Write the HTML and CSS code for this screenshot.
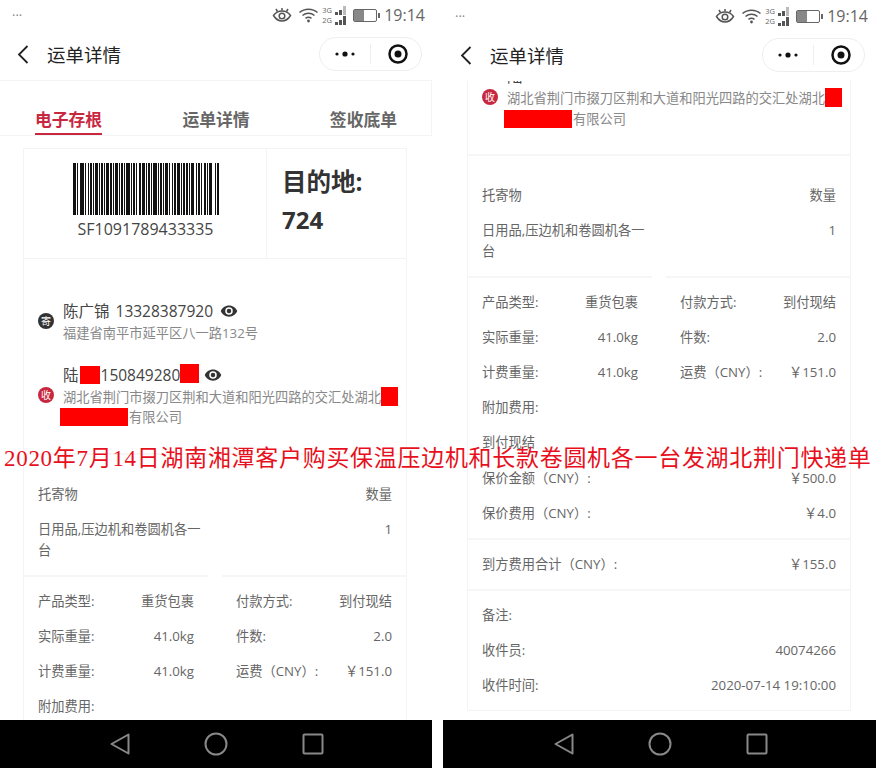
FILE: index.html
```html
<!DOCTYPE html>
<html lang="zh-CN">
<head>
  <meta charset="UTF-8">
  <title>运单详情</title>
  <link rel="stylesheet" href="styles.css">
</head>
<body>
  <div class="phone">
    <div class="status">
      <span class="status-dots">···</span>
      <svg class="ic-eye" width="20" height="16" viewBox="0 0 20 16"><path d="M1.500 8.500C4 5 7 4 10 4s6 1 8.500 4.500C16 12.500 13 14 10 14s-6-1.500-8.500-5.500z"/><circle cx="10" cy="9" r="2.800"/><path d="M4 2l1.500 2.500M10 1v2.500M16 2l-1.500 2.500"/></svg>
      <svg class="ic-wifi" width="21" height="16" viewBox="0 0 21 16"><path d="M1.500 5.500c5-4.500 13-4.500 18 0M4.500 8.500c3.500-3 8.500-3 12 0M7.500 11.300c2-1.500 4-1.500 6 0"/><circle cx="10.500" cy="14" r="1.400"/></svg>
      <div class="net">
        <div class="net-row"><span>3G</span><i class="b1"></i><i class="b2"></i><i class="b3 dim"></i></div>
        <div class="net-row"><span>2G</span><i class="b1"></i><i class="b2"></i><i class="b3"></i></div>
      </div>
      <div class="battery"><div class="battery-fill"></div></div>
      <span class="time">19:14</span>
    </div>
    <div class="nav">
      <svg class="back" width="12" height="19" viewBox="0 0 12 19"><path d="M10.500 1L2 9.500l8.500 8.500"/></svg>
      <span class="nav-title">运单详情</span>
      <div class="capsule">
        <svg class="more" width="20" height="6" viewBox="0 0 20 6"><circle cx="2" cy="3" r="1.600"/><circle cx="10" cy="3" r="2.600"/><circle cx="18" cy="3" r="1.600"/></svg>
        <span class="capsule-line"></span>
        <svg class="target" width="20" height="20" viewBox="0 0 20 20"><circle class="ring" cx="10" cy="10" r="8.500"/><circle cx="10" cy="10" r="3.500"/></svg>
      </div>
    </div>
    <div class="tabs">
      <span class="tab active">电子存根</span>
      <span class="tab">运单详情</span>
      <span class="tab">签收底单</span>
    </div>
    <div class="content has-tabs">
      <div class="card">
        <div class="ticket">
          <div class="code-cell">
            <svg class="barcode" width="146" height="52" viewBox="0 0 146 52"><line x1="0" y1="26" x2="146" y2="26" stroke-dasharray="3 1 1 2 4 1 1 2 1 1 2 1 1 1 3 1 1 1 2 1 1 1 3 1 2 1 1 1 3 1 1 1 2 1 1 1 4 1 1 1 2 1 1 2 2 1 3 1 1 1 2 1 1 1 4 1 1 1 2 1 1 1 3 1 1 2 1 1 2 1 3 1 1 1 2 1 2 1 1 1 3 2 1 1 2 1 1 2 2 1 1 1 3"/></svg>
            <div class="code-text">SF1091789433335</div>
          </div>
          <div class="dest">
            <div class="dest-label">目的地:</div>
            <div class="dest-code">724</div>
          </div>
        </div>
        <div class="contacts">
          <div class="contact">
            <span class="badge">寄</span>
            <div class="contact-body">
              <div class="contact-name">陈广锦 13328387920<svg class="view" width="18" height="18" viewBox="0 0 24 24"><path d="M12 4.500C7 4.500 2.700 7.600 1 12c1.700 4.400 6 7.500 11 7.500s9.300-3.100 11-7.500c-1.700-4.400-6-7.500-11-7.500zM12 17a5 5 0 1 1 0-10 5 5 0 0 1 0 10zm0-8a3 3 0 1 0 0 6 3 3 0 0 0 0-6z"/></svg></div>
              <div class="contact-addr">福建省南平市延平区八一路132号</div>
            </div>
          </div>
          <div class="contact">
            <span class="badge red">收</span>
            <div class="contact-body">
              <div class="contact-name">陆<i class="mask m-name"></i>150849280<i class="mask m-phone"></i><svg class="view" width="18" height="18" viewBox="0 0 24 24"><path d="M12 4.500C7 4.500 2.700 7.600 1 12c1.700 4.400 6 7.500 11 7.500s9.300-3.100 11-7.500c-1.700-4.400-6-7.500-11-7.500zM12 17a5 5 0 1 1 0-10 5 5 0 0 1 0 10zm0-8a3 3 0 1 0 0 6 3 3 0 0 0 0-6z"/></svg></div>
              <div class="contact-addr">湖北省荆门市掇刀区荆和大道和阳光四路的交汇处湖北<i class="mask m-end"></i><i class="mask m-start"></i>有限公司</div>
            </div>
          </div>
        </div>
        <div class="goods">
          <div class="row"><span>托寄物</span><span>数量</span></div>
          <div class="goods-item"><div class="goods-name">日用品,压边机和卷圆机各一台</div><span>1</span></div>
        </div>
        <div class="split-rule"><i></i><i></i></div>
        <div class="fees">
          <div class="fee-grid">
            <div class="row"><span>产品类型:</span><span>重货包裹</span></div>
            <div class="row"><span>付款方式:</span><span>到付现结</span></div>
            <div class="row"><span>实际重量:</span><span>41.0kg</span></div>
            <div class="row"><span>件数:</span><span>2.0</span></div>
            <div class="row"><span>计费重量:</span><span>41.0kg</span></div>
            <div class="row"><span>运费（CNY）:</span><span>￥151.0</span></div>
            <div class="row"><span>附加费用:</span></div>
          </div>
        </div>
      </div>
    </div>
    <div class="softkeys">
      <svg width="20" height="22" viewBox="0 0 20 22"><path d="M18.500 1.500L1.500 11l17 9.500z"/></svg>
      <svg width="24" height="24" viewBox="0 0 24 24"><circle cx="12" cy="12" r="10.500"/></svg>
      <svg width="22" height="22" viewBox="0 0 22 22"><rect x="1.500" y="1.500" width="19" height="19" rx="1"/></svg>
    </div>
  </div>

  <div class="phone second">
    <div class="status">
      <span class="status-dots">···</span>
      <svg class="ic-eye" width="20" height="16" viewBox="0 0 20 16"><path d="M1.500 8.500C4 5 7 4 10 4s6 1 8.500 4.500C16 12.500 13 14 10 14s-6-1.500-8.500-5.500z"/><circle cx="10" cy="9" r="2.800"/><path d="M4 2l1.500 2.500M10 1v2.500M16 2l-1.500 2.500"/></svg>
      <svg class="ic-wifi" width="21" height="16" viewBox="0 0 21 16"><path d="M1.500 5.500c5-4.500 13-4.500 18 0M4.500 8.500c3.500-3 8.500-3 12 0M7.500 11.300c2-1.500 4-1.500 6 0"/><circle cx="10.500" cy="14" r="1.400"/></svg>
      <div class="net">
        <div class="net-row"><span>3G</span><i class="b1"></i><i class="b2"></i><i class="b3 dim"></i></div>
        <div class="net-row"><span>2G</span><i class="b1"></i><i class="b2"></i><i class="b3"></i></div>
      </div>
      <div class="battery"><div class="battery-fill"></div></div>
      <span class="time">19:14</span>
    </div>
    <div class="nav">
      <svg class="back" width="12" height="19" viewBox="0 0 12 19"><path d="M10.500 1L2 9.500l8.500 8.500"/></svg>
      <span class="nav-title">运单详情</span>
      <div class="capsule">
        <svg class="more" width="20" height="6" viewBox="0 0 20 6"><circle cx="2" cy="3" r="1.600"/><circle cx="10" cy="3" r="2.600"/><circle cx="18" cy="3" r="1.600"/></svg>
        <span class="capsule-line"></span>
        <svg class="target" width="20" height="20" viewBox="0 0 20 20"><circle class="ring" cx="10" cy="10" r="8.500"/><circle cx="10" cy="10" r="3.500"/></svg>
      </div>
    </div>
    <div class="content">
      <div class="card scrolled">
        <div class="contacts tail">
          <div class="contact">
            <span class="badge red">收</span>
            <div class="contact-body">
              <div class="contact-name">陆</div>
              <div class="contact-addr">湖北省荆门市掇刀区荆和大道和阳光四路的交汇处湖北<i class="mask m-end"></i><i class="mask m-start"></i>有限公司</div>
            </div>
          </div>
        </div>
        <div class="goods">
          <div class="row"><span>托寄物</span><span>数量</span></div>
          <div class="goods-item"><div class="goods-name">日用品,压边机和卷圆机各一台</div><span>1</span></div>
        </div>
        <div class="split-rule"><i></i><i></i></div>
        <div class="fees">
          <div class="fee-grid">
            <div class="row"><span>产品类型:</span><span>重货包裹</span></div>
            <div class="row"><span>付款方式:</span><span>到付现结</span></div>
            <div class="row"><span>实际重量:</span><span>41.0kg</span></div>
            <div class="row"><span>件数:</span><span>2.0</span></div>
            <div class="row"><span>计费重量:</span><span>41.0kg</span></div>
            <div class="row"><span>运费（CNY）:</span><span>￥151.0</span></div>
          </div>
          <div class="row"><span>附加费用:</span></div>
          <div class="row"><span>到付现结</span></div>
          <div class="row insured"><span>保价金额（CNY）:</span><span>￥500.0</span></div>
          <div class="row"><span>保价费用（CNY）:</span><span>￥4.0</span></div>
        </div>
        <div class="block"><div class="row"><span>到方费用合计（CNY）:</span><span>￥155.0</span></div></div>
        <div class="block last">
          <div class="row"><span>备注:</span></div>
          <div class="row"><span>收件员:</span><span>40074266</span></div>
          <div class="row"><span>收件时间:</span><span>2020-07-14 19:10:00</span></div>
        </div>
      </div>
    </div>
    <div class="softkeys">
      <svg width="20" height="22" viewBox="0 0 20 22"><path d="M18.500 1.500L1.500 11l17 9.500z"/></svg>
      <svg width="24" height="24" viewBox="0 0 24 24"><circle cx="12" cy="12" r="10.500"/></svg>
      <svg width="22" height="22" viewBox="0 0 22 22"><rect x="1.500" y="1.500" width="19" height="19" rx="1"/></svg>
    </div>
  </div>

  <div class="caption">2020年7月14日湖南湘潭客户购买保温压边机和长款卷圆机各一台发湖北荆门快递单</div>
</body>
</html>
```

FILE: styles.css
```css
html, body { margin: 0; padding: 0; }
body { position: relative; width: 877px; height: 768px; overflow: hidden; display: flex; gap: 11px; background: #fff; color: #555; font-family: "Open Sans", "Noto Sans CJK SC", sans-serif; }
i { display: block; }

.phone { width: 432px; height: 768px; flex: none; display: flex; flex-direction: column; }
.phone.second { margin-top: 1px; height: 767px; }

.status { height: 30px; flex: none; display: flex; align-items: center; gap: 6px; padding: 0 7px 0 12px; color: #666; }
.status-dots { margin-right: auto; font-size: 13px; color: #888; }
.ic-eye path, .ic-wifi path { fill: none; stroke: #555; stroke-width: 1.500; }
.ic-eye circle { fill: none; stroke: #555; stroke-width: 1.500; }
.ic-wifi circle { fill: #555; }
.net { width: 25px; font-size: 7.500px; line-height: 10px; color: #666; margin-left: -3px; }
.net-row { display: flex; align-items: flex-end; height: 10px; gap: 1px; }
.net-row span { width: 12px; }
.net-row i { width: 3px; background: #555; }
.net-row .b1 { height: 3px; }
.net-row .b2 { height: 5px; }
.net-row .b3 { height: 9px; }
.net-row .dim { background: #bbb; }
.battery { position: relative; width: 22px; height: 11px; border: 1.500px solid #666; border-radius: 2px; margin-right: 1px; }
.battery::after { content: ""; position: absolute; right: -4px; top: 3px; width: 2px; height: 5px; background: #666; }
.battery-fill { width: 10px; height: 100%; background: #888; }
.time { font-size: 16px; color: #666; }

.nav { height: 50px; flex: none; display: flex; align-items: center; padding: 0 10px 2px 17px; box-sizing: border-box; }
.back path { fill: none; stroke: #222; stroke-width: 1.800; }
.nav-title { margin-left: 18px; font-size: 18.500px; color: #222; }
.capsule { margin-left: auto; width: 103px; height: 34px; box-sizing: border-box; border: 1px solid #eee; border-radius: 17px; display: flex; align-items: center; padding-left: 15px; }
.more { fill: #111; }
.capsule-line { width: 1px; height: 20px; margin: 0 17px 0 15px; background: #eee; }
.target { fill: #111; }
.target .ring { fill: none; stroke: #111; stroke-width: 2.500; }

.tabs { height: 56px; flex: none; box-sizing: border-box; display: flex; align-items: flex-end; justify-content: space-between; padding: 0 34px 0 35px; border: 1px solid #f4f4f4; border-left: none; }
.tab { font-size: 16.800px; line-height: 24px; font-weight: 700; color: #666; padding-bottom: 3px; }
.tab.active { color: #c8283f; border-bottom: 2px solid #c8283f; padding-bottom: 1px; }

.content { flex: 1; min-height: 0; overflow: hidden; padding: 0 25px 0 23px; }
.second .content { padding: 0 24px; }
.content.has-tabs { padding-top: 12px; }
.card { border: 1px solid #f4f4f4; font-size: 13.250px; line-height: 21px; color: #666; }
.card.scrolled { border-top: none; margin-top: -17px; }

.ticket { display: flex; height: 110px; box-sizing: border-box; border-bottom: 1px solid #f4f4f4; }
.code-cell { width: 243px; box-sizing: border-box; border-right: 1px solid #f4f4f4; padding-top: 14px; display: flex; flex-direction: column; align-items: center; }
.barcode { display: block; margin-left: 1px; }
.barcode line { stroke: #111; stroke-width: 52; }
.code-text { margin-left: 1px; font-size: 16px; line-height: 20px; margin-top: 4px; color: #444; }
.dest { padding: 15px 0 0 15px; color: #333; font-weight: 700; font-size: 24.500px; }
.dest-label { line-height: 36px; }
.dest-code { line-height: 40px; font-size: 24px; }

.contacts { padding: 40px 5px 25px 14px; border-bottom: 2px solid #f6f6f6; display: flex; flex-direction: column; gap: 19px; }
.contacts.tail { padding-top: 0; }
.contact { display: flex; align-items: center; gap: 9px; }
.badge { width: 16px; height: 16px; flex: none; border-radius: 50%; background: #333; color: #fff; font-size: 10px; line-height: 16px; text-align: center; }
.badge.red { background: #c8283f; }
.contact-body { flex: 1; min-width: 0; }
.contact-name { font-size: 15.500px; line-height: 24px; color: #444; word-spacing: 2px; }
.contact-addr { font-size: 13.250px; line-height: 20.500px; color: #888; }
.view { fill: #333; margin-left: 7px; vertical-align: -3px; }
.mask { display: inline-block; background: #f00; vertical-align: middle; }
.m-name { width: 20px; height: 18px; margin: -1px 1px 1px; }
.m-phone { width: 19px; height: 19px; margin: -3px 0 3px; }
.m-phone + .view { margin-left: 5px; }
.m-end { width: 17px; height: 19px; margin: -2px 0 1px; }
.m-start { width: 68px; height: 18px; margin: -1px 1px 1px -3px; }

.goods { padding: 22px 14px 14px; }
.row { display: flex; justify-content: space-between; align-items: center; height: 35px; }
.row.insured { margin-top: 1px; }
.goods-item { display: flex; justify-content: space-between; padding-top: 7px; }
.goods-name { width: 166px; }
.split-rule { display: flex; justify-content: space-between; }
.split-rule i { width: 184px; height: 2px; background: #f6f6f6; }

.fees { padding: 7px 14px 7px; border-bottom: 2px solid #f6f6f6; }
.fee-grid { display: grid; grid-template-columns: 156px 156px; justify-content: space-between; }
.block { padding: 7px 14px; border-bottom: 2px solid #f6f6f6; }
.block.last { border-bottom: none; }

.softkeys { height: 48px; flex: none; background: #000; display: flex; align-items: center; justify-content: center; gap: 74px; padding-left: 2px; }
.second .softkeys { margin-right: -1px; }
.softkeys svg { fill: none; stroke: #888; stroke-width: 2; stroke-linejoin: round; }

.caption { position: absolute; left: 4px; top: 444px; font-family: "Liberation Serif", "Noto Sans CJK SC", serif; font-size: 23px; letter-spacing: 0.700px; line-height: 30px; color: #e8101c; white-space: nowrap; }
```
